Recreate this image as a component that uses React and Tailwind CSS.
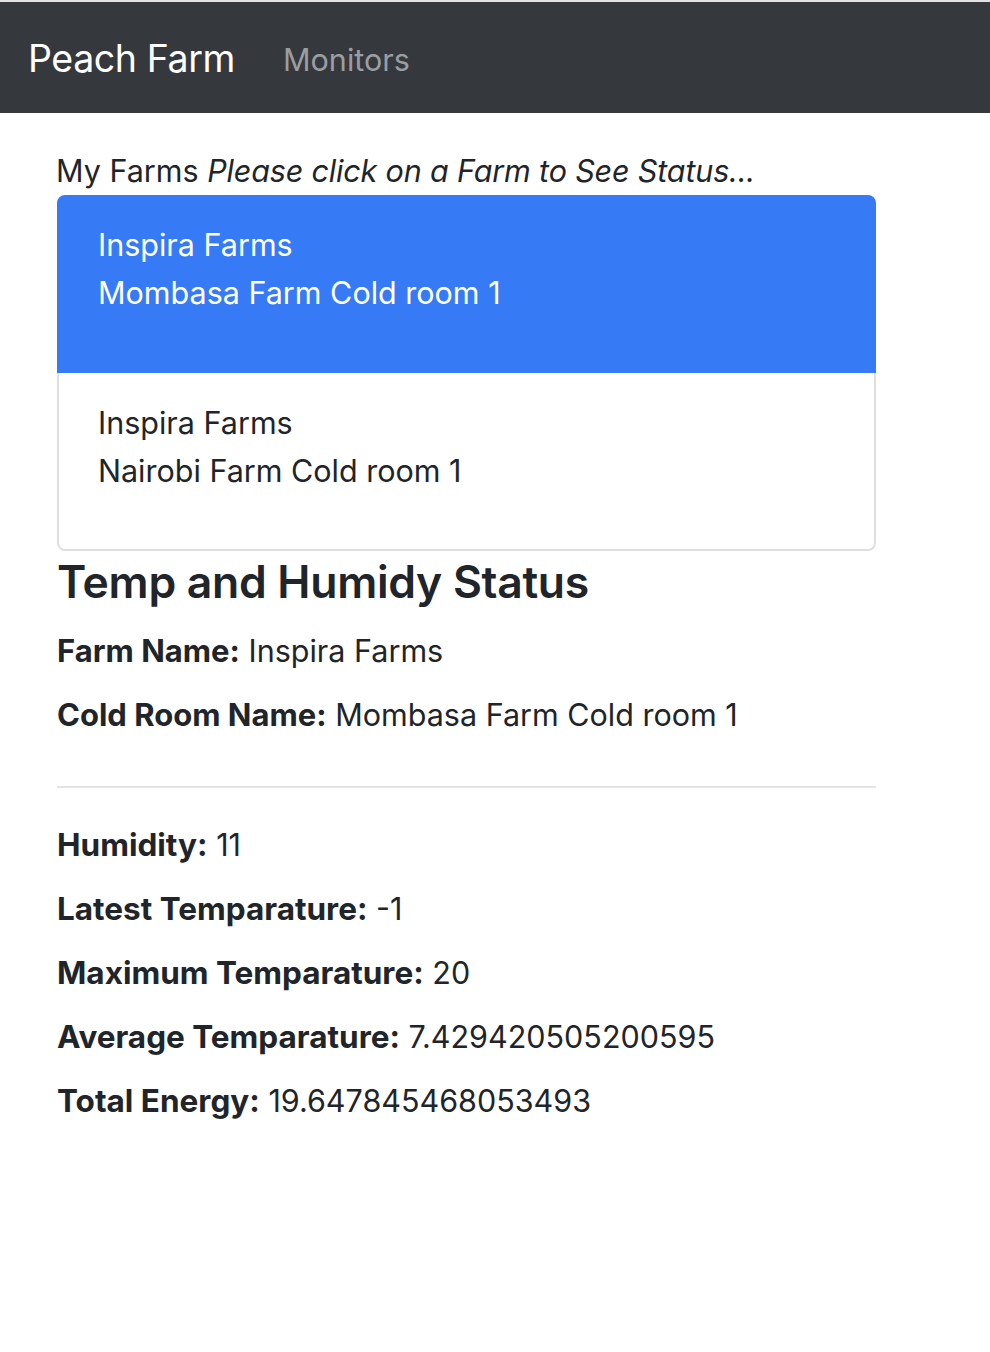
import React, { useState } from "react";

const farms = [
  { id: 1, farmName: "Inspira Farms", coldRoom: "Mombasa Farm Cold room 1" },
  { id: 2, farmName: "Inspira Farms", coldRoom: "Nairobi Farm Cold room 1" },
];

const status = [
  { label: "Humidity:", value: "11" },
  { label: "Latest Temparature:", value: "-1" },
  { label: "Maximum Temparature:", value: "20" },
  { label: "Average Temparature:", value: "7.429420505200595" },
  { label: "Total Energy:", value: "19.647845468053493" },
];

function App() {
  const [selected, setSelected] = useState(1);
  const farm = farms.find((f) => f.id === selected);

  return (
    <div className="min-h-[1352px] bg-white text-[#212529] font-['Inter','Liberation_Sans',sans-serif]">
      <div className="h-[2px] bg-[#e3e3e3]" />
      {/* Navbar */}
      <nav className="h-[111px] bg-[#35393e] flex items-center pl-[28px] pt-[4px]">
        <span className="text-[37.5px] text-white tracking-[-0.4px]">Peach Farm</span>
        <span className="ml-[48px] text-[30.5px] text-[#9b9ea1]">Monitors</span>
      </nav>

      <div className="pl-[56px] pt-[34px] w-[876px]">
        <div className="text-[30.5px] leading-[48px]">
          My Farms <i className="tracking-[-0.15px]">Please click on a Farm to See Status...</i>
        </div>

        {/* Farm list */}
        <div className="ml-[1px]">
          {farms.map((f, i) => (
            <div
              key={f.id}
              onClick={() => setSelected(f.id)}
              className={`${
                f.id === selected
                  ? "bg-[#377af6] text-white border-[#377af6]"
                  : "bg-white border-[#dfdfdf]"
              } ${
                i === 0 ? "rounded-t-[8px] pt-[24px]" : "border-t-0 rounded-b-[8px] pt-[26px]"
              } border-2 h-[178px] pl-[39px] text-[30.5px] leading-[48px] cursor-pointer`}
            >
              <div>{f.farmName}</div>
              <div>{f.coldRoom}</div>
            </div>
          ))}
        </div>

        {/* Status */}
        <h4 className="text-[44.5px] font-semibold leading-[58px] mt-[2px] ml-[1px] tracking-[-0.3px]">
          Temp and Humidy Status
        </h4>
        <div className="mt-[16px] ml-[1px] text-[30.5px] leading-[48px] flex flex-col gap-[16px]">
          <div>
            <b className="font-bold text-[31px]">Farm Name:</b> {farm.farmName}
          </div>
          <div>
            <b className="font-bold text-[31px]">Cold Room Name:</b> {farm.coldRoom}
          </div>
        </div>

        <hr className="mt-[47px] mb-[33px] ml-[1px] border-t-2 border-[#e4e4e4]" />

        <div className="ml-[1px] text-[30.5px] leading-[48px] flex flex-col gap-[16px]">
          {status.map((s) => (
            <div key={s.label}>
              <b className="font-bold text-[31.5px]">{s.label}</b> {s.value}
            </div>
          ))}
        </div>
      </div>
    </div>
  );
}

export default App;
